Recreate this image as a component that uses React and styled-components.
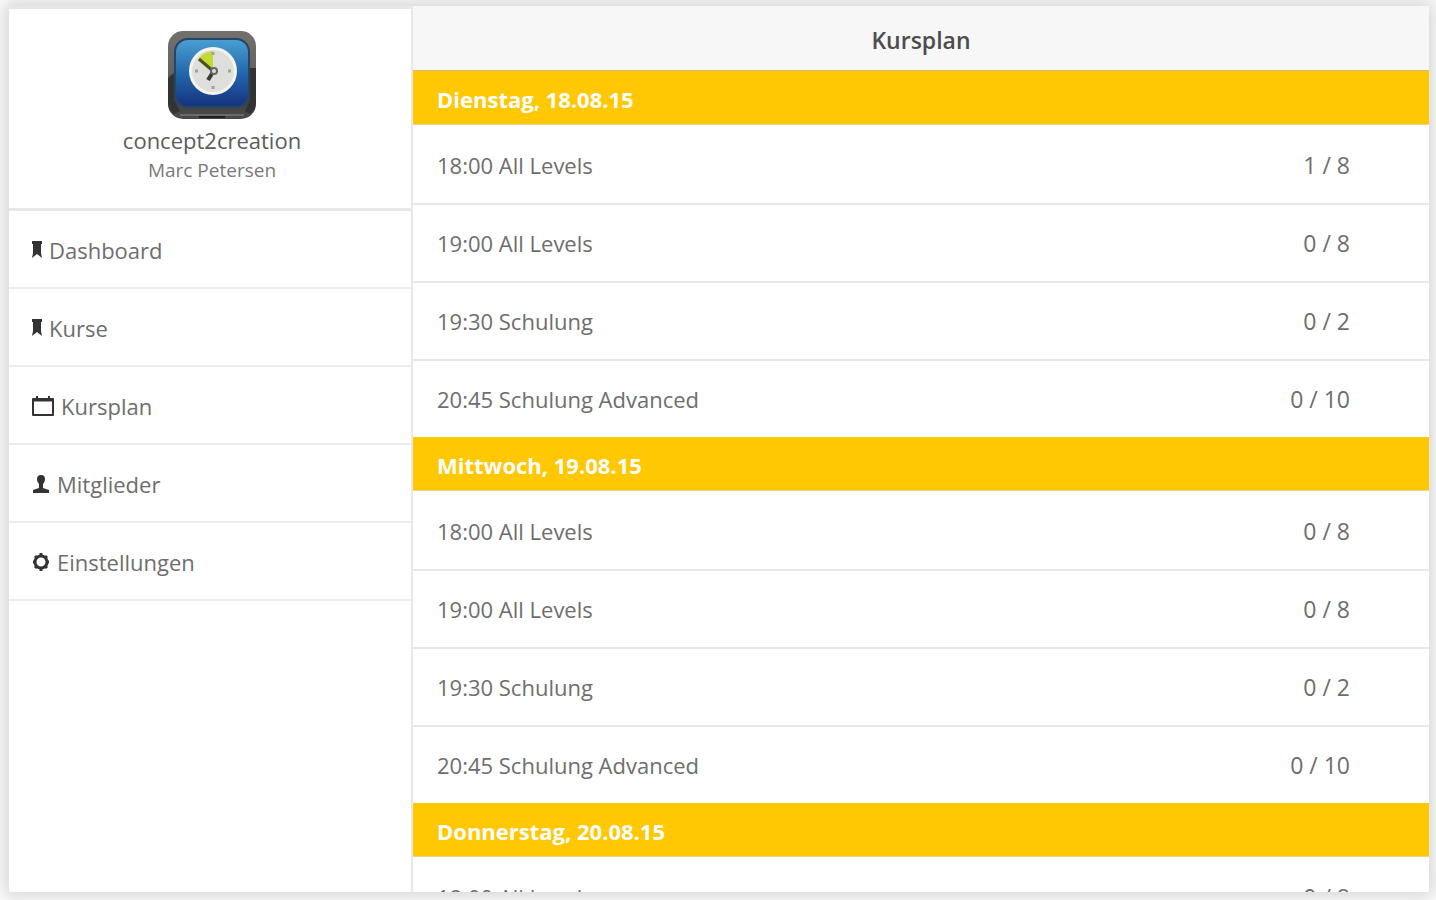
import React from 'react';
import styled, { createGlobalStyle } from 'styled-components';

const ACCENT = '#ffc803';
const LINE = '#e8e8e8';

const GlobalStyle = createGlobalStyle`
  * {
    box-sizing: border-box;
  }

  body {
    margin: 0;
    background-color: #ffffff;
    color: #6e6e6e;
    font-family: 'Open Sans', 'Noto Sans', sans-serif;
    font-size: 22px;
    line-height: 30px;
  }
`;

const Page = styled.div`
  height: 100vh;
  padding: 6px 7px 8px 9px;
  overflow: hidden;
`;

const Frame = styled.div`
  height: 100%;
  display: grid;
  grid-template-columns: 402px minmax(0, 1fr);
  background-color: #ffffff;
  box-shadow: 0 0 18px 6px rgba(0, 0, 0, 0.16);
`;

const Sidebar = styled.aside`
  border-top: 3px solid #e7e7e7;
`;

const Profile = styled.header`
  height: 202px;
  padding: 21px 0 0 4px;
  display: flex;
  flex-direction: column;
  align-items: center;
  border-bottom: 3px solid ${LINE};
`;

const Company = styled.div`
  margin-top: 5px;
  color: #5c5c5c;
`;

const UserName = styled.div`
  font-size: 19px;
  color: #7a7a7a;
`;

const MenuLink = styled.a`
  height: 78px;
  padding: 2px 0 0 23px;
  display: flex;
  align-items: center;
  gap: 7px;
  border-bottom: 2px solid #ededed;
  color: inherit;
  text-decoration: none;
`;

const Icon = styled.svg`
  flex: none;
  color: #333333;
`;

const Content = styled.main`
  min-height: 0;
  overflow: hidden;
  border-left: 2px solid ${LINE};
`;

const TitleBar = styled.header`
  height: 65px;
  display: flex;
  align-items: center;
  justify-content: center;
  padding-top: 4px;
  background-color: #f7f7f7;
  border-bottom: 1px solid #c9bb8c;
`;

const Title = styled.h1`
  margin: 0;
  font-size: 23px;
  font-weight: 600;
  color: #4d4d4d;
`;

const DayTitle = styled.h2`
  margin: 0;
  height: 54px;
  padding: 2px 24px 0;
  display: flex;
  align-items: center;
  border-bottom: 1px solid #e9d48a;
  background-color: ${ACCENT};
  color: #ffffff;
  font-size: 22px;
  font-weight: 700;
`;

const CourseList = styled.ul`
  margin: 0;
  padding: 0;
  list-style: none;
`;

const Course = styled.li`
  height: 78px;
  padding: 2px 79px 0 24px;
  display: flex;
  align-items: center;
  justify-content: space-between;

  & + & {
    border-top: 2px solid ${LINE};
    padding-top: 0;
  }
`;

const Places = styled.span`
  font-size: 23px;
`;

const Logo = () => (
  <svg width="90" height="90" viewBox="0 0 90 90" aria-hidden="true">
    <defs>
      <linearGradient id="rim" x1="0" y1="0" x2="0" y2="1">
        <stop offset="0" stopColor="#73706d" />
        <stop offset="0.48" stopColor="#64625f" />
        <stop offset="0.6" stopColor="#383838" />
        <stop offset="1" stopColor="#4b4b4b" />
      </linearGradient>
      <linearGradient id="face" x1="0" y1="0" x2="0" y2="1">
        <stop offset="0" stopColor="#4aa0d2" />
        <stop offset="0.5" stopColor="#2467ad" />
        <stop offset="1" stopColor="#14327d" />
      </linearGradient>
    </defs>
    <rect x="1" y="1" width="88" height="88" rx="15" fill="url(#rim)" />
    <path d="M1 48l6-5v27l6 11-6 3q-6-5-6-12zM89 38h-6v32l-5 11 5 3q6-5 6-12z" fill="#333333" />
    <path d="M13 85h64" stroke="#6b6b6b" strokeWidth="2" />
    <path d="M32 87h26" stroke="#1f1f1f" strokeWidth="2" />
    <rect x="8" y="9" width="74" height="68" rx="13" fill="url(#face)" stroke="#254765" strokeWidth="2" />
    <circle cx="46" cy="41" r="24" fill="#f4f4ef" />
    <circle cx="46" cy="41" r="21" fill="#dededb" />
    <path d="M46 41L32 28q5-6 14-7z" fill="#c4d932" />
    <path d="M46 22v3M46 56v3M28 41h3M61 41h3" stroke="#a0a09c" strokeWidth="3" />
    <path d="M32 29l14 12" fill="none" stroke="#4a5220" strokeWidth="3" />
    <path d="M46 42l-5 8" fill="none" stroke="#383b3b" strokeWidth="4" />
    <circle cx="47" cy="41" r="4" fill="#666666" />
    <circle cx="47" cy="41" r="2" fill="#dddddd" />
  </svg>
);

const BookmarkIcon = () => (
  <Icon width="10" height="18" viewBox="0 0 10 18" aria-hidden="true">
    <path d="M0 0h10v3H9v9l1 5-5-4-5 4 1-5V3H0z" fill="currentColor" />
  </Icon>
);

const CalendarIcon = () => (
  <Icon width="22" height="22" viewBox="0 0 22 22" aria-hidden="true">
    <path d="M1 4h20v16H1z" fill="none" stroke="currentColor" strokeWidth="2" strokeLinejoin="round" />
    <path d="M2 5h18" stroke="currentColor" strokeWidth="3" />
    <path d="M5 1v3M17 1v3" stroke="currentColor" strokeWidth="2" />
  </Icon>
);

const PersonIcon = () => (
  <Icon width="18" height="20" viewBox="0 0 18 20" aria-hidden="true">
    <path
      d="M9 1c3 0 4 2 4 4s-1 4-2 5v4l6 2v3H1v-3l6-2v-4C6 9 5 7 5 5s1-4 4-4z"
      fill="currentColor"
    />
  </Icon>
);

const GearIcon = () => (
  <Icon width="18" height="20" viewBox="0 0 18 20" aria-hidden="true">
    <circle cx="9" cy="10" r="6" fill="none" stroke="currentColor" strokeWidth="3" />
    <path
      d="M9 1v3M9 16v3M1 10h2M15 10h2M3 4l2 2M13 14l2 2M15 4l-2 2M5 14l-2 2"
      stroke="currentColor"
      strokeWidth="3"
    />
  </Icon>
);

const menu = [
  { label: 'Dashboard', icon: BookmarkIcon },
  { label: 'Kurse', icon: BookmarkIcon },
  { label: 'Kursplan', icon: CalendarIcon },
  { label: 'Mitglieder', icon: PersonIcon },
  { label: 'Einstellungen', icon: GearIcon },
];

const days = [
  {
    date: 'Dienstag, 18.08.15',
    courses: [
      { name: '18:00 All Levels', places: '1 / 8' },
      { name: '19:00 All Levels', places: '0 / 8' },
      { name: '19:30 Schulung', places: '0 / 2' },
      { name: '20:45 Schulung Advanced', places: '0 / 10' },
    ],
  },
  {
    date: 'Mittwoch, 19.08.15',
    courses: [
      { name: '18:00 All Levels', places: '0 / 8' },
      { name: '19:00 All Levels', places: '0 / 8' },
      { name: '19:30 Schulung', places: '0 / 2' },
      { name: '20:45 Schulung Advanced', places: '0 / 10' },
    ],
  },
  {
    date: 'Donnerstag, 20.08.15',
    courses: [{ name: '18:00 All Levels', places: '0 / 8' }],
  },
];

export default function App() {
  return (
    <Page>
      <GlobalStyle />
      <Frame>
        <Sidebar>
          <Profile>
            <Logo />
            <Company>concept2creation</Company>
            <UserName>Marc Petersen</UserName>
          </Profile>
          <nav>
            {menu.map(({ label, icon: MenuIcon }) => (
              <MenuLink key={label} href="#">
                <MenuIcon />
                {label}
              </MenuLink>
            ))}
          </nav>
        </Sidebar>
        <Content>
          <TitleBar>
            <Title>Kursplan</Title>
          </TitleBar>
          {days.map(({ date, courses }) => (
            <section key={date}>
              <DayTitle>{date}</DayTitle>
              <CourseList>
                {courses.map(({ name, places }) => (
                  <Course key={name}>
                    <span>{name}</span>
                    <Places>{places}</Places>
                  </Course>
                ))}
              </CourseList>
            </section>
          ))}
        </Content>
      </Frame>
    </Page>
  );
}
